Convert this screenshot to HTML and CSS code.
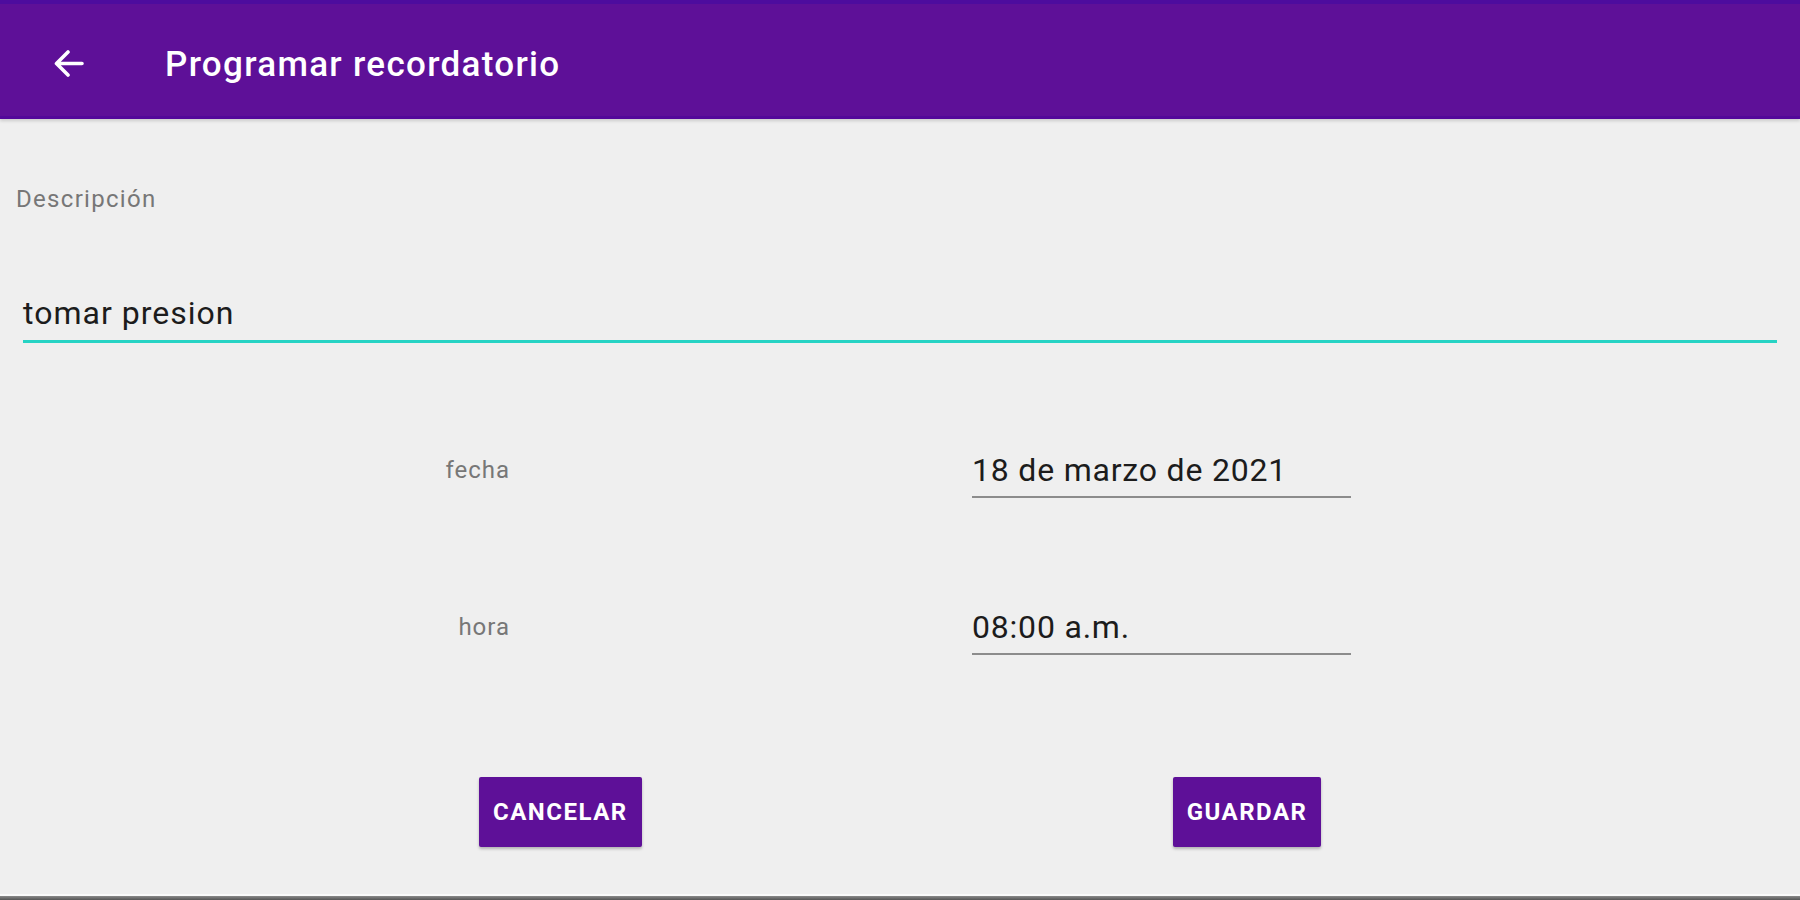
FILE: index.html
```html
<!DOCTYPE html>
<html lang="es">
<head>
    <meta charset="UTF-8">
    <meta name="viewport" content="width=device-width, initial-scale=1.0">
    <title>Programar recordatorio</title>
    <link rel="stylesheet" href="styles.css">
</head>
<body>
    <header class="toolbar">
        <button class="back" aria-label="Volver">
            <svg width="31" height="27" viewBox="0 0 31 27">
                <path d="M29 13.5H4M15 2L3.5 13.5L15 25" fill="none" stroke="#fff" stroke-width="3.6" stroke-linecap="round" stroke-linejoin="round"/>
            </svg>
        </button>
        <h1>Programar recordatorio</h1>
    </header>

    <main class="form">
        <label class="desc-label" for="desc">Descripción</label>
        <div class="field">tomar presion</div>

        <div class="schedule">
            <span class="row-label">fecha</span>
            <div class="row-value">18 de marzo de 2021</div>
            <span class="row-label">hora</span>
            <div class="row-value">08:00 a.m.</div>
        </div>

        <div class="actions">
            <button class="btn">Cancelar</button>
            <button class="btn">Guardar</button>
        </div>
    </main>

    <div class="navbar"></div>
</body>
</html>
```

FILE: styles.css
```css
html, body {
    margin: 0;
    height: 100%;
}
body {
    font-family: Roboto, "Noto Sans", Arial, sans-serif;
    background-color: #efefef;
    display: flex;
    flex-direction: column;
}
.toolbar {
    height: 112px;
    box-sizing: content-box;
    background-color: #5e1098;
    border-top: 4px solid #4d0c9e;
    border-bottom: 3px solid #53089a;
    box-shadow: 0 2px 3px rgba(0,0,0,0.15);
    display: flex;
    align-items: center;
    padding-left: 53px;
}
.back {
    background: none;
    border: none;
    padding: 0;
    width: 31px;
    height: 27px;
    margin-top: 6px;
    cursor: pointer;
}
.toolbar h1 {
    margin: 8px 0 0 81px;
    color: #fff;
    font-size: 35px;
    font-weight: 500;
    letter-spacing: 1.3px;
}
.form {
    padding: 0 23px 0 16px;
}
.desc-label {
    display: block;
    margin-top: 67px;
    font-size: 24px;
    line-height: 26px;
    letter-spacing: 1.3px;
    color: #777;
}
.field {
    margin: 83px 0 0 7px;
    font-size: 32px;
    line-height: 36px;
    letter-spacing: 1px;
    color: #1c1c1c;
    padding-bottom: 9px;
    border-bottom: 3px solid #27d3c4;
}
.schedule {
    display: grid;
    grid-template-columns: 494px 379px;
    column-gap: 462px;
    row-gap: 111px;
    margin-top: 109px;
}
.row-label {
    text-align: right;
    font-size: 24px;
    line-height: 36px;
    letter-spacing: 1px;
    color: #777;
}
.row-value {
    font-size: 32px;
    line-height: 36px;
    letter-spacing: 0.8px;
    color: #1c1c1c;
    padding-bottom: 8px;
    border-bottom: 2px solid #8c8c8c;
}
.actions {
    display: flex;
    gap: 531px;
    padding-left: 463px;
    margin-top: 122px;
}
.btn {
    height: 70px;
    padding: 0 14px;
    background-color: #5e1098;
    color: #fff;
    border: none;
    border-radius: 2px;
    box-shadow: 0 2px 3px rgba(0,0,0,0.25);
    font-family: Roboto, Arial, sans-serif;
    font-size: 24px;
    font-weight: 700;
    letter-spacing: 1.5px;
    text-transform: uppercase;
    cursor: pointer;
}
.navbar {
    margin-top: auto;
    height: 4px;
    border-top: 2px solid #fafafa;
    background: linear-gradient(#8a8a8a, #555);
}
```
